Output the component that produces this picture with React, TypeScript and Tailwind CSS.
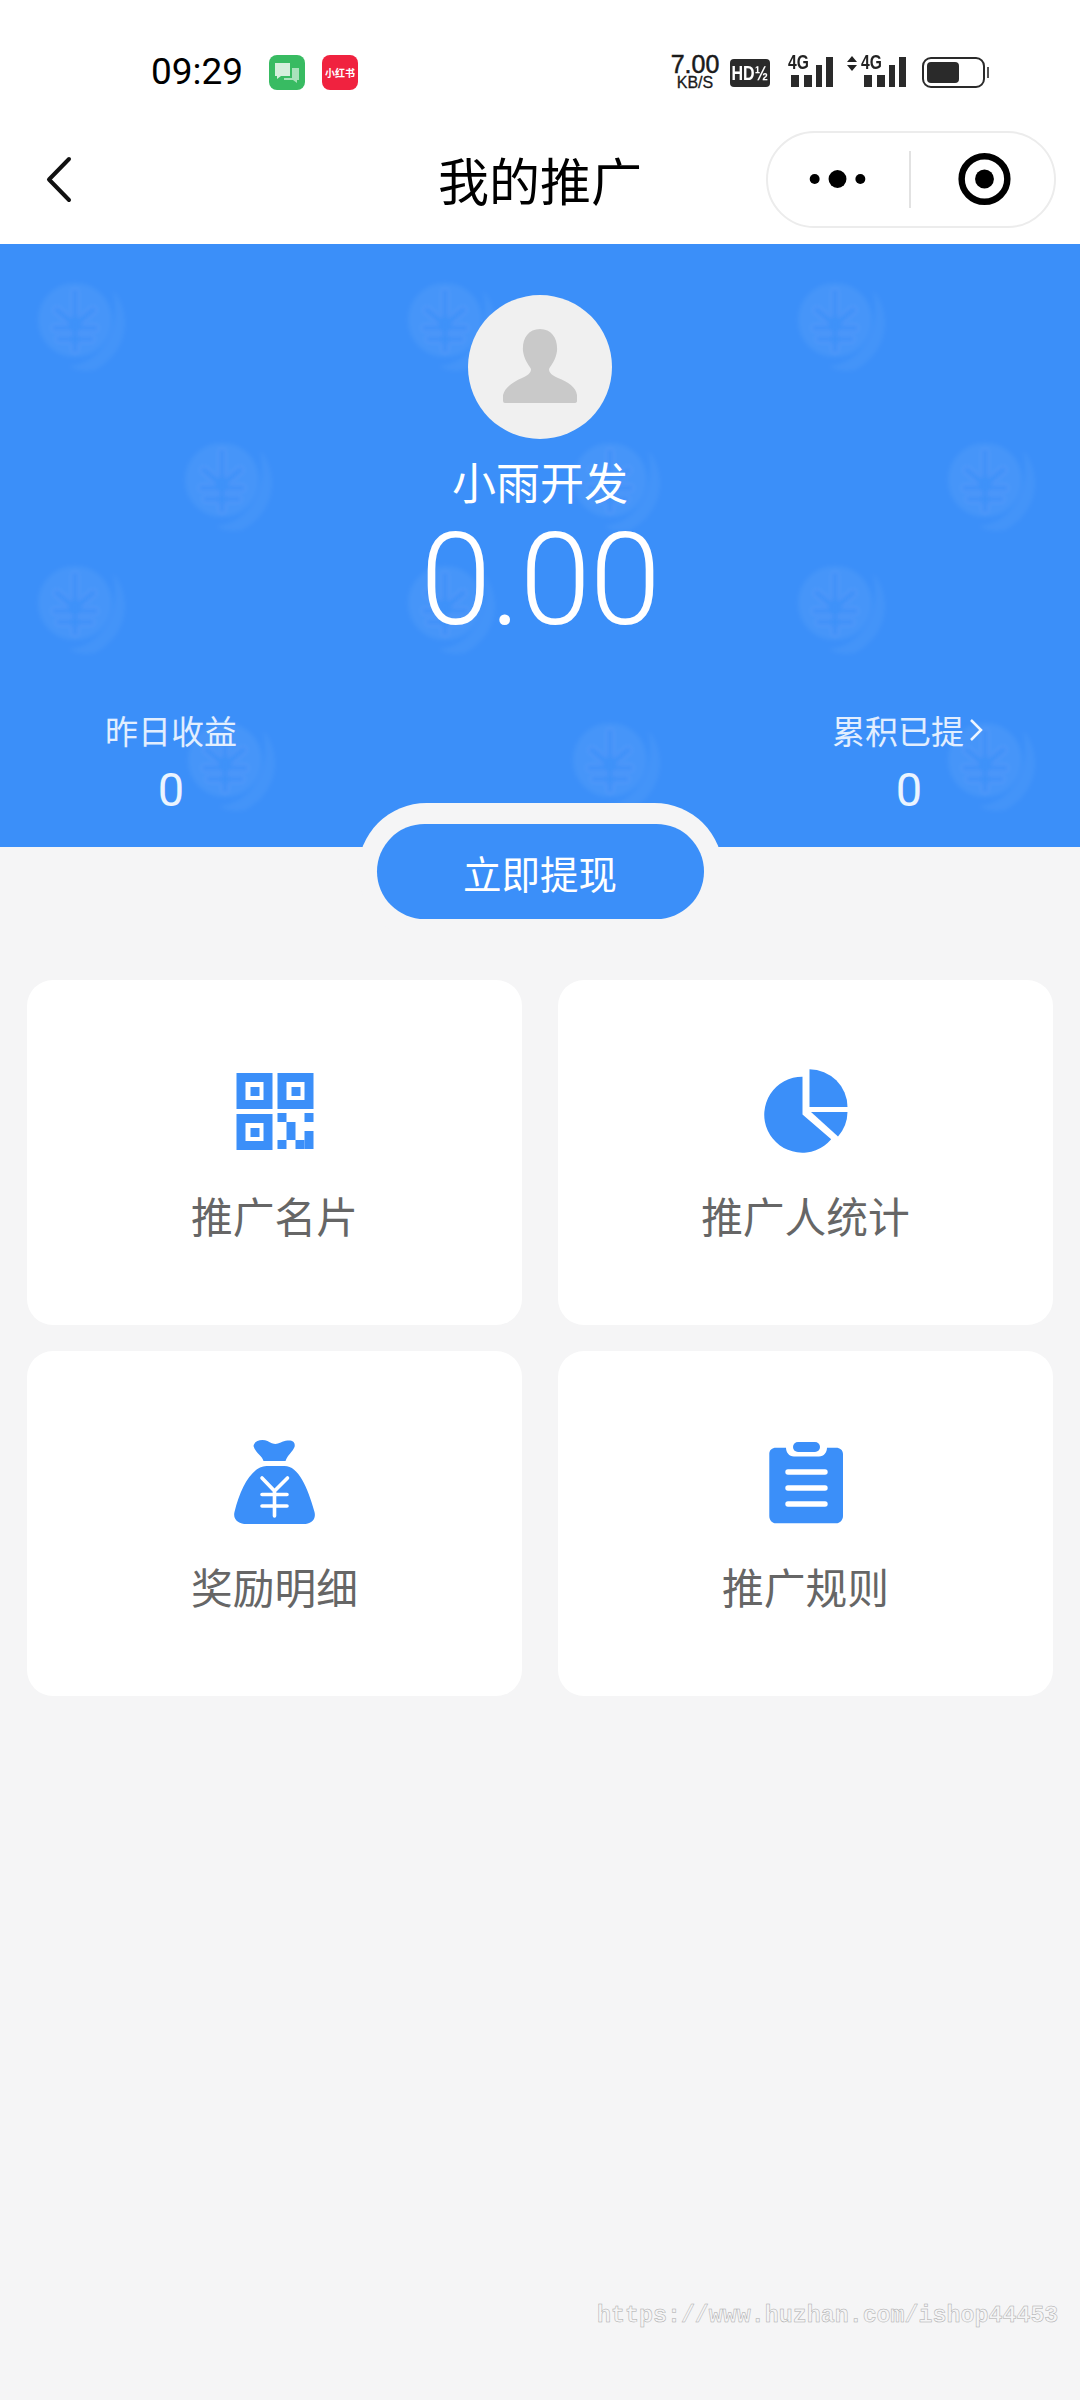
import React from "react";

const COINS: [number, number][] = [
  [75, 76], [445, 76], [835, 76],
  [222, 236], [610, 236], [985, 236],
  [75, 359], [445, 359], [835, 359],
  [225, 516], [610, 516], [985, 516],
];

function CoinPattern() {
  return (
    <svg className="absolute inset-0 h-full w-full" viewBox="0 0 1080 603" aria-hidden="true">
      <defs>
        <filter id="coinblur"><feGaussianBlur stdDeviation="2" /></filter>
      </defs>
      {COINS.map(([x, y]) => (
        <g key={`${x}-${y}`} transform={`translate(${x} ${y})`} filter="url(#coinblur)">
          <circle r="37" fill="#ffffff" fillOpacity="0.055" />
          <path d="M38 -30 C56 -8 56 30 20 50 C8 52 0 50 -6 46 C24 44 48 12 38 -30Z" fill="#ffffff" fillOpacity="0.045" />
          <path d="M-18 -10 L0 5 L18 -10 M-20 8 L20 8 M-16 19 L16 19 M0 -28 L0 30" stroke="#3b8ff9" strokeOpacity="0.6" strokeWidth="6" fill="none" strokeLinecap="round" />
        </g>
      ))}
    </svg>
  );
}

function Signal({ arrows }: { arrows?: boolean }) {
  return (
    <div className="relative flex h-[32px] items-end">
      {arrows && (
        <svg width="12" height="16" viewBox="0 0 12 16" className="mr-[3px] self-start">
          <path d="M6 0 L11 6 L1 6Z M1 9 L11 9 L6 15Z" fill="#222" />
        </svg>
      )}
      <div className="relative h-[32px] w-[46px]">
        <span className="absolute left-0 top-[-4px] origin-left scale-x-[0.78] text-[20px] font-bold leading-[20px] text-[#222] [font-family:'Liberation_Sans',sans-serif]">4G</span>
        <svg width="46" height="32" viewBox="0 0 46 32">
          <rect x="3" y="19" width="8" height="12" fill="#2a2a2a" />
          <rect x="16" y="19" width="8" height="12" fill="#2a2a2a" />
          <rect x="28" y="9" width="6" height="22" fill="#2a2a2a" />
          <rect x="38" y="1" width="7" height="30" fill="#2a2a2a" />
        </svg>
      </div>
    </div>
  );
}

function StatusBar() {
  return (
    <div className="flex h-[130px] items-start pl-[151px] pr-[91px] pt-[52px]">
      <span className="w-[118px] text-[37px] leading-[40px] text-black [font-family:Roboto,sans-serif]">09:29</span>
      <div className="mt-[3px] flex h-[35px] w-[36px] items-center justify-center rounded-[8px] bg-[#38bb62]">
        <svg width="26" height="24" viewBox="0 0 26 24">
          <path d="M1 2 H16 V15 H7 L3 18 V15 H1Z" fill="#d5efdc" />
          <path d="M18 7 H25 V19 H23 V22 L19 19 H10 V17 H18Z" fill="#a9e2bb" />
        </svg>
      </div>
      <div className="ml-[17px] mt-[3px] flex h-[35px] w-[36px] items-center justify-center rounded-[8px] bg-[#f0223f] text-[10px] font-bold leading-none whitespace-nowrap text-white">
        小红书
      </div>
      <div className="ml-auto flex items-start">
        <div className="mt-[1px] flex w-[50px] flex-col items-center text-[#1a1a1a] [font-family:'Liberation_Sans',sans-serif]">
          <span className="h-[22px] text-[25px] leading-[22px] [-webkit-text-stroke:0.5px_#1a1a1a]">7.00</span>
          <span className="h-[16px] text-[16px] leading-[16px] [-webkit-text-stroke:0.3px_#1a1a1a]">KB/S</span>
        </div>
        <div className="ml-[10px] mt-[7px] flex h-[28px] w-[40px] items-center justify-center overflow-hidden rounded-[4px] bg-[#2a2a2a] text-[20px] font-bold leading-none whitespace-nowrap text-white [font-family:'Liberation_Sans',sans-serif]">
          <span className="scale-x-[0.8]">HD½</span>
        </div>
        <div className="ml-[18px] mt-[4px]"><Signal /></div>
        <div className="ml-[12px] mt-[4px]"><Signal arrows /></div>
        <div className="ml-[15px] mt-[5px] flex items-center">
          <div className="flex h-[31px] w-[63px] items-stretch rounded-[9px] border-[2px] border-[#2a2a2a] p-[3px]">
            <div className="w-[32px] rounded-[4px] bg-[#2a2a2a]" />
          </div>
          <div className="ml-[2px] h-[11px] w-[2px] bg-[#555]" />
        </div>
      </div>
    </div>
  );
}

function NavBar() {
  return (
    <div className="grid h-[114px] grid-cols-[1fr_auto_1fr] items-center bg-white">
      <svg width="30" height="50" viewBox="0 0 30 50" className="ml-[44px] -mt-[14px]">
        <path d="M25 4 L5 24.5 L25 45" stroke="#111" strokeWidth="4" fill="none" strokeLinecap="round" strokeLinejoin="round" />
      </svg>
      <h1 className="-mt-[16px] text-[51px] font-normal leading-[60px] text-black">我的推广</h1>
      <div className="-mt-[16px] mr-[24px] flex h-[97px] w-[290px] items-center justify-self-end rounded-full border-[2px] border-[#ececec] bg-white">
        <svg width="142" height="24" viewBox="0 0 142 24">
          <circle cx="47" cy="12" r="5" fill="#000" />
          <circle cx="70" cy="12" r="9" fill="#000" />
          <circle cx="93" cy="12" r="5" fill="#000" />
        </svg>
        <div className="h-[57px] w-[2px] bg-[#e2e2e2]" />
        <svg width="144" height="56" viewBox="0 0 144 56">
          <circle cx="74" cy="28" r="23" stroke="#000" strokeWidth="6.5" fill="none" />
          <circle cx="74" cy="28" r="9.5" fill="#000" />
        </svg>
      </div>
    </div>
  );
}

function Hero() {
  return (
    <section className="relative h-[603px] overflow-hidden bg-[#3b8ff9] text-white">
      <CoinPattern />
      <div className="relative flex flex-col items-center pt-[51px]">
        <div className="flex h-[144px] w-[144px] items-center justify-center rounded-full bg-[#f0f0f0]">
          <svg width="80" height="80" viewBox="0 0 80 80">
            <path d="M40 2 C52 2 58 12 57 24 C56 32 52 37 49 42 C49 46 52 48 58 51 C68 55 76 60 77 68 L77 74 Q77 76 74 76 L5 76 Q3 76 3 74 L3 68 C5 60 13 55 22 51 C28 48 31 46 31 42 C28 37 24 32 23 24 C22 12 28 2 40 2Z" fill="#c9c9c9" />
          </svg>
        </div>
        <div className="mt-[12px] text-[44px] leading-[60px]">小雨开发</div>
        <div className="mt-[4px] h-[130px] text-[128px] font-light leading-[130px] tracking-[-1px] [font-family:Roboto,sans-serif]">0.00</div>
      </div>
      <div className="relative mt-[63px] flex justify-between px-[71px]">
        <div className="flex w-[200px] flex-col items-center">
          <span className="text-[33px] leading-[44px] text-white/85">昨日收益</span>
          <span className="mt-[6px] text-[47px] leading-[64px] text-white/90 [font-family:Roboto,sans-serif]">0</span>
        </div>
        <div className="flex w-[200px] flex-col items-center">
          <span className="flex items-center whitespace-nowrap text-[33px] leading-[44px] text-white/85">
            累积已提
            <svg width="20" height="26" viewBox="0 0 20 26" className="ml-[2px]">
              <path d="M5 3 L15 13 L5 23" stroke="#ffffff" strokeOpacity="0.9" strokeWidth="2.5" fill="none" />
            </svg>
          </span>
          <span className="mt-[6px] text-[47px] leading-[64px] text-white/90 [font-family:Roboto,sans-serif]">0</span>
        </div>
      </div>
    </section>
  );
}

function QrIcon() {
  const cells = [[41, 40], [68, 40], [50, 49], [50, 58], [68, 58], [68, 67], [59, 67], [41, 67]];
  const finder = [[0, 0], [41, 0], [0, 41]];
  return (
    <svg width="84" height="84" viewBox="-3.5 -4 84 84">
      {finder.map(([x, y]) => (
        <g key={`${x}-${y}`}>
          <rect x={x} y={y} width="36" height="36" fill="#3b8ff9" />
          <rect x={x + 9} y={y + 9} width="18" height="18" fill="#fff" />
          <rect x={x + 14} y={y + 14} width="9" height="9" fill="#3b8ff9" />
        </g>
      ))}
      {cells.map(([x, y]) => (
        <rect key={`${x}-${y}`} x={x} y={y} width="9" height="9" fill="#3b8ff9" />
      ))}
    </svg>
  );
}

function PieIcon() {
  return (
    <svg width="84" height="84" viewBox="33.5 29 84 84">
      <path d="M72 36.7 A38 38 0 1 0 100.7 99.3 L72 74.5Z" fill="#3b8ff9" />
      <path d="M79 29.3 A38 38 0 0 1 117 67 L79 67Z" fill="#3b8ff9" />
      <path d="M80.5 72 L117 72 A38 38 0 0 1 107.5 96.5Z" fill="#3b8ff9" />
    </svg>
  );
}

function BagIcon() {
  return (
    <svg width="84" height="84" viewBox="22.5 20 84 84">
      <path d="M43 26 C44 20 52 19 57 21 C60 23 63 24 65 24 C68 24 72 21 77 20.5 C83 20 85 23 84 27 C82 32 77 35 75 41 L53 41 C52 36 45 33 43 26Z" fill="#3b8ff9" />
      <path d="M56 46 L74 46 C88 46 97 67 104 92 C106 100 100 104 93 104 L36 104 C29 104 22 100 24 92 C30 67 42 46 56 46Z" fill="#3b8ff9" />
      <path d="M51.5 58 L64 71 L77 58 M64 71 L64 96 M51.5 74.5 L76.5 74.5 M51.5 86 L76.5 86" stroke="#fff" strokeWidth="3.6" strokeLinecap="round" strokeLinejoin="round" fill="none" />
    </svg>
  );
}

function ClipboardIcon() {
  return (
    <svg width="84" height="84" viewBox="23 20 84 84">
      <rect x="52" y="22" width="27" height="10" rx="5" fill="#3b8ff9" />
      <path d="M35 27.7 L45 27.7 C45 32 48 36.5 53 36.5 L78 36.5 C83 36.5 86 32 86 27.7 L95 27.7 C99 27.7 102 30 102 34 L102 96 C102 100 99 103.3 95 103.3 L35 103.3 C31 103.3 28.3 100 28.3 96 L28.3 34 C28.3 30 31 27.7 35 27.7Z" fill="#3b8ff9" />
      <path d="M47 52 L84 52 M47 68 L84 68 M47 84 L84 84" stroke="#fff" strokeWidth="5.4" strokeLinecap="round" />
    </svg>
  );
}

function Card({ icon, label }: { icon: React.ReactNode; label: string }) {
  return (
    <div className="flex h-[345px] flex-col items-center rounded-[26px] bg-white pt-[89px]">
      {icon}
      <span className="mt-[34px] text-[41.75px] leading-[56px] text-[#666666]">{label}</span>
    </div>
  );
}

export default function App() {
  return (
    <div className="relative min-h-[2400px] w-[1080px] overflow-hidden bg-[#f5f5f6] [font-family:'Noto_Sans_CJK_SC','Noto_Sans',sans-serif]">
      <div className="bg-white"><StatusBar /><NavBar /></div>
      <Hero />
      <div className="relative -mt-[44px] flex justify-center">
        <div className="rounded-[70px] bg-[#f5f5f6] px-[19px] py-[21px]">
          <button className="flex h-[95px] w-[327px] items-center justify-center rounded-full bg-[#3b8ff9] text-[38.5px] leading-[56px] text-white">
            立即提现
          </button>
        </div>
      </div>
      <div className="mt-[40px] grid grid-cols-2 gap-x-[36px] gap-y-[26px] px-[27px]">
        <Card icon={<QrIcon />} label="推广名片" />
        <Card icon={<PieIcon />} label="推广人统计" />
        <Card icon={<BagIcon />} label="奖励明细" />
        <Card icon={<ClipboardIcon />} label="推广规则" />
      </div>
      <div className="absolute left-[597px] top-[2302px] text-[23.3px] font-bold leading-[28px] text-transparent [-webkit-text-stroke:0.5px_#aaaaaa] [font-family:'Liberation_Mono',monospace]">
        https://www.huzhan.com/ishop44453
      </div>
    </div>
  );
}
